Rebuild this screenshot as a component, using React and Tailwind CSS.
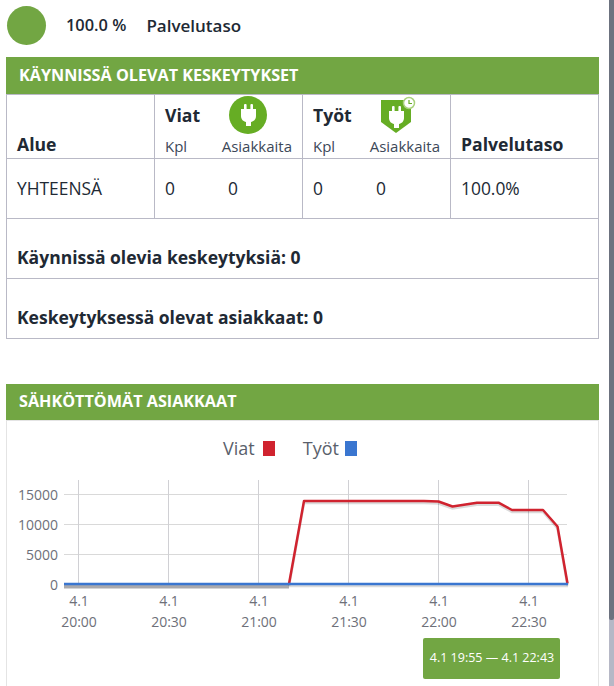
const ticks = [
    { x: 78.5, label: '20:00' },
    { x: 168.5, label: '20:30' },
    { x: 258.5, label: '21:00' },
    { x: 348.5, label: '21:30' },
    { x: 438.5, label: '22:00' },
    { x: 528.5, label: '22:30' }
];

const yTicks = [
    { y: 494.5, label: '15000' },
    { y: 524.5, label: '10000' },
    { y: 554.5, label: '5000' },
    { y: 584.5, label: '0' }
];

const redLine = '289,584 304,501 424,501 438.5,501.5 452.5,506.5 477,502.7 498.5,502.7 512,510 543,510 557.5,526.5 567.5,583.5';

function PlugShape({ transform }) {
    return (
        <g transform={transform} fill="#fff">
            <rect x="-4.5" y="-11" width="2.6" height="6" rx="1" />
            <rect x="1.9" y="-11" width="2.6" height="6" rx="1" />
            <path d="M-7.5 -6 H7.5 V1 C7.5 4.5 5 6.5 2.5 7 V11 H-2.5 V7 C-5 6.5 -7.5 4.5 -7.5 1 Z" />
        </g>
    );
}

function Chart() {
    // chart coordinates are page pixels, viewBox is offset to the svg's place
    return (
        <svg viewBox="7 470 591 160" className="block w-[591px] h-[160px]" style={{ fontFamily: '"Open Sans", sans-serif' }}>
            {yTicks.map((t) => (
                <g key={t.label}>
                    <line x1="64" x2="567" y1={t.y} y2={t.y} stroke="#d9d9d9" />
                    <text x="58" y={t.y + 5} textAnchor="end" fontSize="14" fill="#6e7079">{t.label}</text>
                </g>
            ))}
            {ticks.map((t) => (
                <g key={t.label}>
                    <line x1={t.x} x2={t.x} y1="480" y2="584" stroke="#d0d0d4" />
                    <text x={t.x + 0.5} y="606" textAnchor="middle" fontSize="14" fill="#6e7079">4.1</text>
                    <text x={t.x + 0.5} y="627" textAnchor="middle" fontSize="14" fill="#6e7079">{t.label}</text>
                </g>
            ))}
            <rect x="64" y="585" width="225" height="3.5" fill="#a9a9ad" />
            <polyline points={redLine} transform="translate(0 2)" fill="none" stroke="#000" strokeOpacity="0.14" strokeWidth="2.5" />
            <line x1="289" x2="568" y1="586" y2="586" stroke="#000" strokeOpacity="0.14" strokeWidth="2.5" />
            <polyline points={redLine} fill="none" stroke="#d0232f" strokeWidth="2.5" strokeLinejoin="round" />
            <line x1="64" x2="568" y1="584" y2="584" stroke="#3a76d0" strokeWidth="2.5" />
        </svg>
    );
}

export default function App() {
    return (
        <div className="flex h-[686px] w-[614px] overflow-hidden bg-white text-[#212934] font-['Open_Sans',sans-serif]">
            <div className="w-[609px] shrink-0 pl-[6px] pr-[10px]">
                <div className="flex items-center h-[57px] pb-[6px]">
                    <div className="w-[39px] h-[39px] ml-px rounded-full bg-[#72a643]" />
                    <span className="ml-[20px] text-[16.4px] font-semibold">100.0 %</span>
                    <span className="ml-[20px] text-[17px] font-semibold">Palvelutaso</span>
                </div>

                <div className="h-[37px] bg-[#72a643] pl-[13px] pb-px flex items-center text-white text-[16.2px] font-bold">
                    KÄYNNISSÄ OLEVAT KESKEYTYKSET
                </div>
                <div className="border border-[#b9b9c6]">
                    <div className="grid grid-cols-[147px_148px_148px_1fr] border-b border-[#b9b9c6] h-[64px]">
                        <div className="flex items-end pl-[10px] pb-[1px] text-[17.6px] font-bold">Alue</div>
                        <div className="border-l border-[#b9b9c6] pl-[10px] flex flex-col">
                            <div className="flex items-start h-[40px]">
                                <span className="mt-[7px] text-[17.6px] font-bold w-[64px]">Viat</span>
                                <svg viewBox="0 0 38 38" className="w-[38px] h-[38px] mt-px shrink-0">
                                    <circle cx="19" cy="19" r="19" fill="#66ad24" />
                                    <PlugShape transform="translate(19.5 19)" />
                                </svg>
                            </div>
                            <div className="flex text-[15px] justify-between pr-[10px] text-[#3c4858]">
                                <span>Kpl</span>
                                <span>Asiakkaita</span>
                            </div>
                        </div>
                        <div className="border-l border-[#b9b9c6] pl-[10px] flex flex-col">
                            <div className="flex items-start h-[40px]">
                                <span className="mt-[7px] text-[17.6px] font-bold w-[68px]">Työt</span>
                                <svg viewBox="0 0 36 38" className="w-[36px] h-[38px] mt-px shrink-0">
                                    <path d="M0 4 H30 V26 L15 37 L0 26 Z" fill="#66ad24" />
                                    <PlugShape transform="translate(15.5 21)" />
                                    <circle cx="28" cy="7" r="5.5" fill="#fff" stroke="#a9d17c" strokeWidth="1.5" />
                                    <path d="M28 4 V7.5 H31" fill="none" stroke="#66ad24" strokeWidth="1.2" />
                                </svg>
                            </div>
                            <div className="flex text-[15px] justify-between pr-[10px] text-[#3c4858]">
                                <span>Kpl</span>
                                <span>Asiakkaita</span>
                            </div>
                        </div>
                        <div className="border-l border-[#b9b9c6] flex items-end pl-[10px] pb-[1px] text-[17.6px] font-bold">Palvelutaso</div>
                    </div>

                    <div className="grid grid-cols-[147px_148px_148px_1fr] border-b border-[#b9b9c6] h-[60px] text-[17.4px] items-stretch">
                        <div className="flex items-center pl-[10px]">YHTEENSÄ</div>
                        <div className="border-l border-[#b9b9c6] flex items-center pl-[10px]">
                            <span className="w-[63px]">0</span>
                            <span>0</span>
                        </div>
                        <div className="border-l border-[#b9b9c6] flex items-center pl-[10px]">
                            <span className="w-[63px]">0</span>
                            <span>0</span>
                        </div>
                        <div className="border-l border-[#b9b9c6] flex items-center pl-[10px]">100.0%</div>
                    </div>

                    <div className="h-[60px] border-b border-[#b9b9c6] pl-[10px] pt-[25px] text-[17.5px] font-bold">Käynnissä olevia keskeytyksiä: 0</div>
                    <div className="h-[59px] pl-[10px] pt-[25px] text-[17.5px] font-bold">Keskeytyksessä olevat asiakkaat: 0</div>
                </div>

                <div className="mt-[45px] h-[36px] bg-[#72a643] pl-[13px] pb-px flex items-center text-white text-[16.2px] font-bold">
                    SÄHKÖTTÖMÄT ASIAKKAAT
                </div>
                <div className="border-x border-t border-[#e4e4e4] h-[270px]">
                    <div className="flex justify-center items-center h-[49px] pt-[6px] pr-[25px] text-[18px] text-[#5a5f6b]">
                        <span>Viat</span>
                        <span className="ml-[8px] w-[12px] h-[15px] bg-[#d0232f]" />
                        <span className="ml-[28px]">Työt</span>
                        <span className="ml-[6px] w-[12px] h-[15px] bg-[#3a76d0]" />
                    </div>
                    <Chart />
                    <div className="flex justify-end pr-[38px] mt-[8px]">
                        <div className="w-[137px] h-[41px] pl-px rounded-[2px] bg-[#72a643] text-white text-[12.5px] flex items-center justify-center">
                            4.1 19:55 — 4.1 22:43
                        </div>
                    </div>
                </div>
            </div>

            <div className="w-[5px] shrink-0 bg-[#b6b8c6]">
                <div className="h-[620px] rounded-b-[2px] bg-[#6c727f]" />
            </div>
        </div>
    );
}
